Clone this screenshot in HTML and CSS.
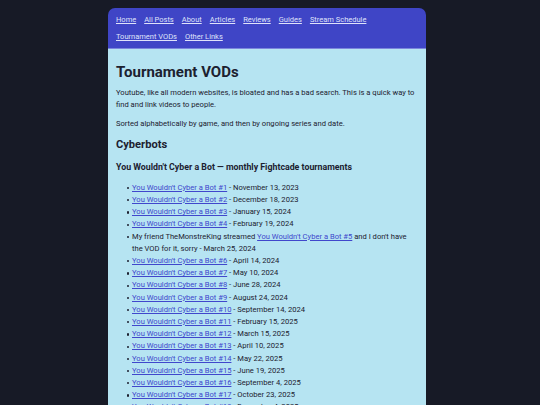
FILE: index.html
```html
<!DOCTYPE html>
<html lang="en">
<head>
<meta charset="utf-8">
<title>Tournament VODs</title>
<link rel="stylesheet" href="styles.css">
</head>
<body>
<div class="page">
  <nav class="nav">
    <a href="#">Home</a>
    <a href="#">All Posts</a>
    <a href="#">About</a>
    <a href="#">Articles</a>
    <a href="#">Reviews</a>
    <a href="#">Guides</a>
    <a href="#">Stream Schedule</a>
    <a href="#">Tournament VODs</a>
    <a href="#">Other Links</a>
  </nav>
  <main class="content">
    <h1 class="title">Tournament VODs</h1>
    <p class="para">Youtube, like all modern websites, is bloated and has a bad search. This is a quick way to find and link videos to people.</p>
    <p class="para">Sorted alphabetically by game, and then by ongoing series and date.</p>
    <h2 class="game">Cyberbots</h2>
    <h3 class="series">You Wouldn't Cyber a Bot — monthly Fightcade tournaments</h3>
    <ul class="vods">
      <li><a href="#">You Wouldn't Cyber a Bot #1</a> - November 13, 2023</li>
      <li><a href="#">You Wouldn't Cyber a Bot #2</a> - December 18, 2023</li>
      <li><a href="#">You Wouldn't Cyber a Bot #3</a> - January 15, 2024</li>
      <li><a href="#">You Wouldn't Cyber a Bot #4</a> - February 19, 2024</li>
      <li>My friend TheMonstreKing streamed <a href="#">You Wouldn't Cyber a Bot #5</a> and I don't have the VOD for it, sorry - March 25, 2024</li>
      <li><a href="#">You Wouldn't Cyber a Bot #6</a> - April 14, 2024</li>
      <li><a href="#">You Wouldn't Cyber a Bot #7</a> - May 10, 2024</li>
      <li><a href="#">You Wouldn't Cyber a Bot #8</a> - June 28, 2024</li>
      <li><a href="#">You Wouldn't Cyber a Bot #9</a> - August 24, 2024</li>
      <li><a href="#">You Wouldn't Cyber a Bot #10</a> - September 14, 2024</li>
      <li><a href="#">You Wouldn't Cyber a Bot #11</a> - February 15, 2025</li>
      <li><a href="#">You Wouldn't Cyber a Bot #12</a> - March 15, 2025</li>
      <li><a href="#">You Wouldn't Cyber a Bot #13</a> - April 10, 2025</li>
      <li><a href="#">You Wouldn't Cyber a Bot #14</a> - May 22, 2025</li>
      <li><a href="#">You Wouldn't Cyber a Bot #15</a> - June 19, 2025</li>
      <li><a href="#">You Wouldn't Cyber a Bot #16</a> - September 4, 2025</li>
      <li><a href="#">You Wouldn't Cyber a Bot #17</a> - October 23, 2025</li>
      <li><a href="#">You Wouldn't Cyber a Bot #18</a> - December 4, 2025</li>
    </ul>
  </main>
</div>
</body>
</html>
```

FILE: styles.css
```css
html, body {
  margin: 0;
  padding: 0;
}
body {
  background: #171a26;
  font-family: Roboto, "Liberation Sans", sans-serif;
  color: #1c2130;
  font-size: 7.6px;
  line-height: 11.6px;
  padding-right: 6px;
  height: 405px;
  overflow: hidden;
}
.page {
  width: 318px;
  margin: 8px auto 0;
}
.nav {
  background: #3f45c6;
  border-radius: 7px 7px 0 0;
  display: flex;
  flex-wrap: wrap;
  column-gap: 8px;
  row-gap: 4.5px;
  padding: 6px 8px 5px;
  border-bottom: 1px solid #7c86dc;
}
.nav a {
  color: #dfe2fa;
  font-size: 7.5px;
  line-height: 12px;
}
.content {
  background: #b6e4f2;
  padding: 8px 8px 20px;
}
.title {
  font-size: 15px;
  line-height: 18px;
  margin: 6px 0 6.7px;
  font-weight: 700;
}
.para {
  margin: 0 0 7.4px;
}
.game {
  font-size: 11.1px;
  line-height: 14px;
  margin: 8.7px 0 8.7px;
  font-weight: 700;
}
.series {
  font-size: 8.8px;
  line-height: 12px;
  margin: 0 0 9px;
  font-weight: 700;
}
.vods {
  margin: 0;
  padding-left: 16px;
  list-style: none;
}
.vods li {
  line-height: 12.2px;
  position: relative;
}
.vods li::before {
  content: "";
  position: absolute;
  left: -5.5px;
  top: 5.2px;
  width: 2.2px;
  height: 2.2px;
  border-radius: 50%;
  background: #1c2130;
}
.vods a {
  color: #4047cc;
}
```
